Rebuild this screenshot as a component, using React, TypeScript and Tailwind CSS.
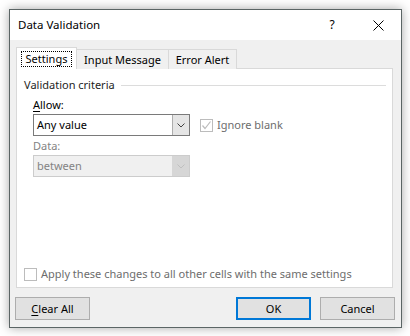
import React from "react"

const font = { fontFamily: '"Noto Sans", "Segoe UI", sans-serif' }

function Chevron({ color }: { color: string }) {
  return (
    <svg width="8" height="5" viewBox="0 0 8 5" className="block">
      <path d="M0.5 0.5 L4 4 L7.5 0.5" fill="none" stroke={color} strokeWidth="1" />
    </svg>
  )
}

function Combo({ value, disabled }: { value: string; disabled?: boolean }) {
  return (
    <div
      className={
        disabled
          ? "flex h-[22px] w-[157px] border border-[#cccccc] bg-[#f0f0f0]"
          : "flex h-[22px] w-[157px] border border-[#7a7a7a] bg-white"
      }
    >
      <div
        className={
          disabled
            ? "flex flex-1 items-center pl-[3px] text-[#838383]"
            : "flex flex-1 items-center pl-[3px] text-black"
        }
      >
        {value}
      </div>
      <div
        className={
          disabled
            ? "flex w-[17px] items-center justify-center bg-[#d6d6d6]"
            : "flex w-[17px] items-center justify-center border-l border-[#adadad] bg-[#e5e5e5]"
        }
      >
        <Chevron color={disabled ? "#bfbfbf" : "#404040"} />
      </div>
    </div>
  )
}

function Check({ checked }: { checked?: boolean }) {
  return (
    <div className="flex h-[13px] w-[13px] items-center justify-center border border-[#bcbcbc] bg-white">
      {checked && (
        <svg width="11" height="11" viewBox="0 0 11 11">
          <path d="M1.5 5.5 L4 8.5 L9.5 1.5" fill="none" stroke="#bcbcbc" strokeWidth="1.2" />
        </svg>
      )}
    </div>
  )
}

function Button({
  children,
  primary,
  className,
}: {
  children: React.ReactNode
  primary?: boolean
  className?: string
}) {
  return (
    <div
      className={
        (primary
          ? "border-2 border-[#0078d7] "
          : "border border-[#adadad] ") +
        "flex h-[23px] w-[75px] items-center justify-center bg-[#e1e1e1] text-black " +
        (className ?? "")
      }
    >
      {children}
    </div>
  )
}

export default function App() {
  return (
    <div
      className="h-[336px] w-[410px] overflow-hidden bg-white pl-[9px] pt-[9px] text-[11px] leading-[16px]"
      style={font}
    >
      <div className="flex h-[319px] w-[393px] flex-col border border-[#5b6565] shadow-[0_0_10px_rgba(0,0,0,0.35)]">
        {/* title bar */}
        <div className="flex h-[30px] items-center bg-white">
          <div className="flex-1 pl-[8px] text-[11.5px] text-black">Data Validation</div>
          <div className="flex h-full w-[46px] items-center justify-center text-[12px] text-black">?</div>
          <div className="flex h-full w-[46px] items-center justify-center">
            <svg width="11" height="11" viewBox="0 0 11 11">
              <path d="M0.5 0.5 L10.5 10.5 M10.5 0.5 L0.5 10.5" stroke="#000" strokeWidth="1" />
            </svg>
          </div>
        </div>

        {/* body */}
        <div className="flex flex-1 flex-col bg-[#f0f0f0] pt-[7px]">
          <div className="relative z-10 -mb-px ml-[6px] flex items-end">
            <div className="flex h-[22px] w-[61px] items-center justify-center border border-b-0 border-[#d9d9d9] bg-white">
              <span className="border border-dotted border-black px-[4px] leading-[14px]">Settings</span>
            </div>
            <div className="flex h-[20px] w-[92px] items-center justify-center border border-b-0 border-l-0 border-[#d9d9d9] bg-[#f0f0f0] text-black">
              Input Message
            </div>
            <div className="flex h-[20px] w-[68px] items-center justify-center border border-b-0 border-l-0 border-[#d9d9d9] bg-[#f0f0f0] text-black">
              Error Alert
            </div>
          </div>

          <div className="ml-[6px] mr-[8px] flex h-[220px] flex-col border border-[#d9d9d9] bg-white">
            <div className="mt-[8px] flex items-center pl-[7px] pr-[6px]">
              <span className="text-[#1e1e1e]">Validation criteria</span>
              <div className="ml-[6px] h-px flex-1 bg-[#dcdcdc]" />
            </div>

            <div className="mt-[4px] pl-[16px]">
              <span className="underline decoration-1 underline-offset-2">A</span>llow:
            </div>
            <div className="mt-px flex items-center pl-[16px]">
              <Combo value="Any value" />
              <div className="ml-[10px] flex items-center gap-[4px] text-[#6d6d6d]">
                <Check checked />
                <span>Ignore blank</span>
              </div>
            </div>

            <div className="mt-[2px] pl-[16px] text-[#838383]">Data:</div>
            <div className="mt-px pl-[16px]">
              <Combo value="between" disabled />
            </div>

            <div className="mb-[5px] mt-auto flex items-center gap-[4px] pl-[7px] text-[#6d6d6d]">
              <Check />
              <span>Apply these changes to all other cells with the same settings</span>
            </div>
          </div>

          <div className="ml-[5px] mr-[6px] mt-[9px] flex">
            <Button>
              <span>
                <span className="underline decoration-1 underline-offset-2">C</span>lear All
              </span>
            </Button>
            <div className="flex-1" />
            <Button primary>OK</Button>
            <Button className="ml-[9px]">Cancel</Button>
          </div>
        </div>
      </div>
    </div>
  )
}
